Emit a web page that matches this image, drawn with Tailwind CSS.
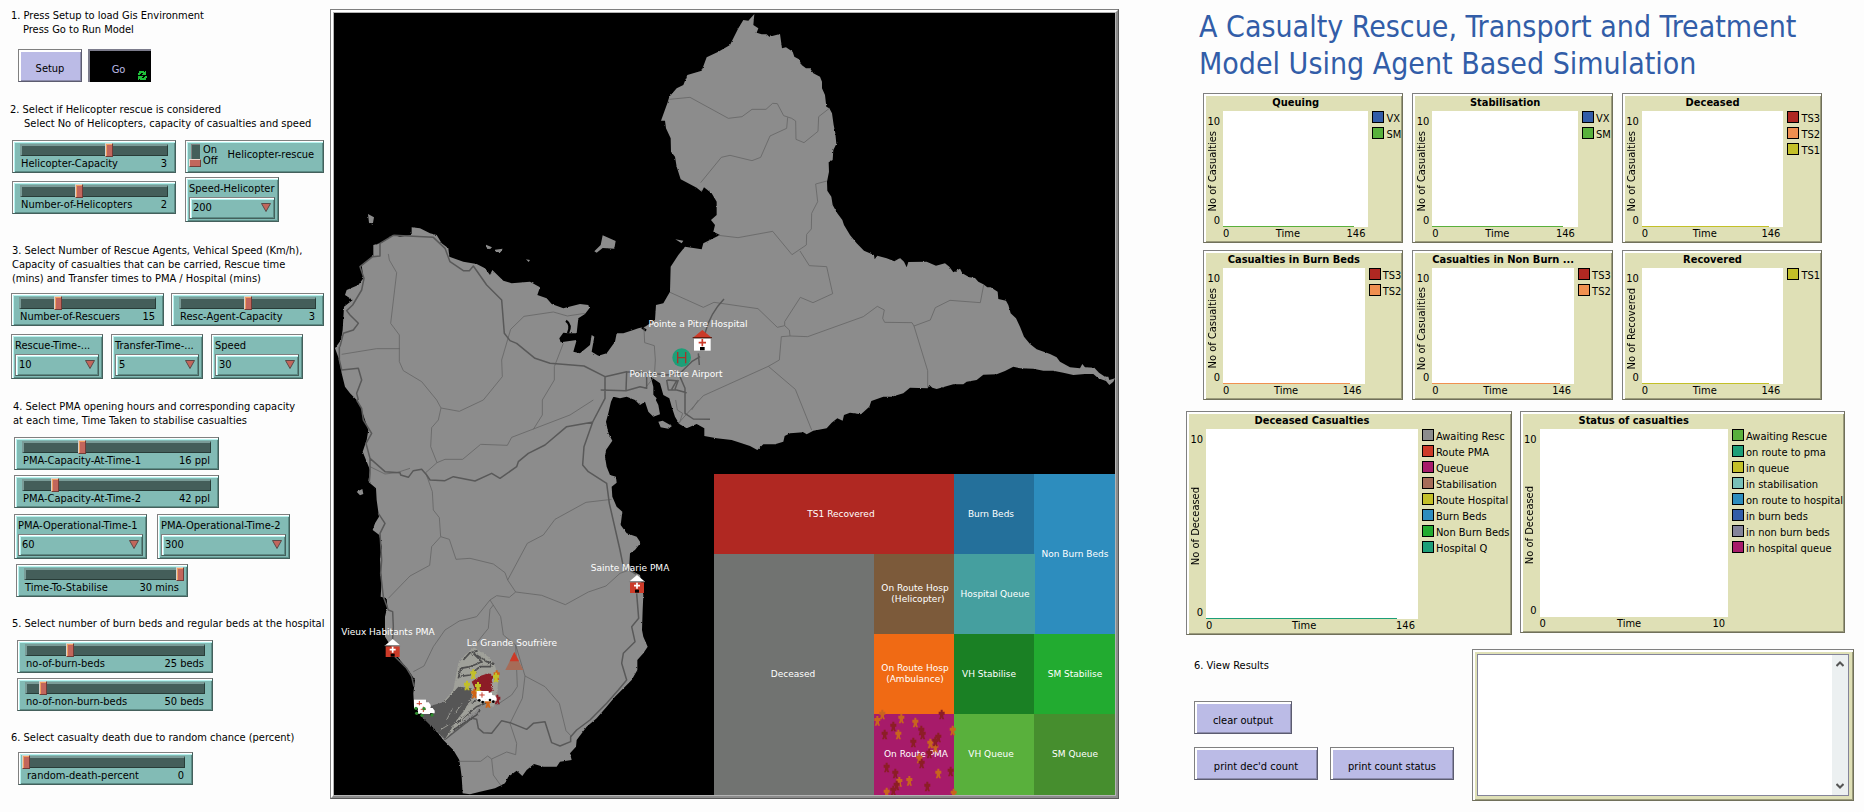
<!DOCTYPE html>
<html lang="en">
<head>
<meta charset="utf-8">
<title>A Casualty Rescue, Transport and Treatment Model</title>
<script src="https://cdn.jsdelivr.net/npm/@tailwindcss/browser@4"></script>
</head>
<body class="bg-[#fdfdfd] font-['DejaVu_Sans_Condensed','DejaVu_Sans',sans-serif] text-[11px] leading-[14px] text-black">
<main class="grid min-h-screen grid-cols-[330fr_789fr_745fr]">

  <!-- Model controls -->
  <section class="flex flex-col items-start pt-[9px] whitespace-nowrap" aria-label="Model controls">
    <p class="ml-[11px]">1. Press Setup to load Gis Environment<br><span class="pl-3">Press Go to Run Model</span></p>
    <div class="mt-3 ml-[18px] flex gap-1.5">
      <button class="h-[33px] w-16 border border-t-[#808080] border-l-[#808080] border-r-[#5c5c70] border-b-[#5c5c70] bg-[#bbbbe6] pt-1.5 shadow-[inset_2px_2px_0_#fff,inset_-1px_-1px_0_#8c8cac]">Setup</button>
      <button class="relative h-[33px] w-[63px] border-t-2 border-l-2 border-[#7c7c8c] bg-black pt-1.5 pr-1 text-[#bbbbe6]">Go
        <svg class="absolute right-1 bottom-0.5 size-[9px]" viewBox="0 0 9 9" fill="#1fbf3a"><path d="M1 0h5v1h1v-1h1v4H4V3h1V2H3v1H2v1H0V2h1zM0 5h5v1H4v1h2V6h1V5h2v2H8v2H2V8H1v1H0z"/></svg>
      </button>
    </div>

    <p class="mt-[21px] ml-2.5">2. Select if Helicopter rescue is considered<br><span class="pl-3.5">Select No of Helicopters, capacity of casualties and speed</span></p>
    <div class="mt-[9px] ml-3 flex gap-[9px]">
      <div class="flex flex-col gap-2">
        <div data-slider="Helicopter-Capacity" data-min="0" data-max="5" data-value="3" class="w-[164px]"></div>
        <div data-slider="Number-of-Helicopters" data-min="0" data-max="5" data-value="2" class="w-[164px]"></div>
      </div>
      <div class="flex flex-col items-start gap-1">
        <label class="flex h-[33px] w-[139px] items-start border border-t-[#808080] border-l-[#808080] border-r-[#44605c] border-b-[#44605c] bg-[#82bbb5] pt-[3px] pl-[3px] shadow-[inset_1px_1px_0_#fff,inset_2px_2px_0_#b8f4f0,inset_-1px_-1px_0_#5c8c86]">
          <span class="relative flex w-3 justify-center">
            <input type="checkbox" role="switch" class="peer h-[15px] w-[9px] appearance-none border-t border-l border-[#808080] bg-[#445e5a]">
            <span class="pointer-events-none absolute top-[15px] left-0 h-2 w-3 border border-t-[#f0d8d0] border-l-[#f0d8d0] border-r-[#703c38] border-b-[#703c38] bg-[#c2665c] peer-checked:top-0"></span>
          </span>
          <span class="flex flex-col pl-0.5 leading-[11px]"><span>On</span><span>Off</span></span>
          <span class="pt-1 pl-2.5">Helicopter-rescue</span>
        </label>
        <div data-chooser="Speed-Helicopter" data-value="200" class="w-[94px]"></div>
      </div>
    </div>

    <p class="mt-[22px] ml-3">3. Select Number of Rescue Agents, Vehical Speed (Km/h),<br>Capacity of casualties that can be carried, Rescue time<br>(mins) and Transfer times to PMA / Hospital (mins)</p>
    <div class="mt-[7px] ml-[11px] flex gap-[7px]">
      <div data-slider="Number-of-Rescuers" data-min="1" data-max="50" data-value="15" class="w-[153px]"></div>
      <div data-slider="Resc-Agent-Capacity" data-min="1" data-max="5" data-value="3" class="w-[153px]"></div>
    </div>
    <div class="mt-2 ml-[11px] flex gap-2">
      <div data-chooser="Rescue-Time-..." data-value="10" class="w-[92px]"></div>
      <div data-chooser="Transfer-Time-..." data-value="5" class="w-[92px]"></div>
      <div data-chooser="Speed" data-value="30" class="w-[92px]"></div>
    </div>

    <p class="mt-[21px] ml-[13px]">4. Select PMA opening hours and corresponding capacity<br>at each time, Time Taken to stabilise casualties</p>
    <div class="mt-[9px] ml-3.5 flex flex-col gap-[5px]">
      <div data-slider="PMA-Capacity-At-Time-1" data-min="0" data-max="50" data-value="16" data-unit=" ppl" class="w-[205px]"></div>
      <div data-slider="PMA-Capacity-At-Time-2" data-min="0" data-max="240" data-value="42" data-unit=" ppl" class="w-[205px]"></div>
      <div class="flex gap-2.5 pt-px">
        <div data-chooser="PMA-Operational-Time-1" data-value="60" class="w-[133px]"></div>
        <div data-chooser="PMA-Operational-Time-2" data-value="300" class="w-[133px]"></div>
      </div>
      <div data-slider="Time-To-Stabilise" data-min="0" data-max="30" data-value="30" data-unit=" mins" class="ml-0.5 w-[172px]"></div>
    </div>

    <p class="mt-5 ml-3">5. Select number of burn beds and regular beds at the hospital</p>
    <div class="mt-[9px] ml-[17px] flex flex-col gap-[5px]">
      <div data-slider="no-of-burn-beds" data-min="0" data-max="100" data-value="25" data-unit=" beds" class="w-[196px]"></div>
      <div data-slider="no-of-non-burn-beds" data-min="0" data-max="500" data-value="50" data-unit=" beds" class="w-[196px]"></div>
    </div>

    <p class="mt-5 ml-[11px]">6. Select casualty death due to random chance (percent)</p>
    <div class="mt-[7px] ml-[18px]">
      <div data-slider="random-death-percent" data-min="0" data-max="100" data-value="0" class="w-[175px]"></div>
    </div>
  </section>

  <!-- World view -->
  <section class="pt-[9px]" aria-label="World view">
    <div class="border border-t-[#808080] border-l-[#808080] border-r-[#585858] border-b-[#585858]">
      <div class="border-2 border-t-white border-l-white border-r-[#8c8c8c] border-b-[#8c8c8c]">
        <div class="border border-[#b4b4b4] bg-black">
          <svg class="block w-full" viewBox="334 13 781 782" role="img" aria-label="Map of Guadeloupe">
            <defs>
              <filter id="coast" x="-2%" y="-2%" width="104%" height="104%"><feTurbulence type="fractalNoise" baseFrequency=".16" numOctaves="2" seed="4"/><feDisplacementMap in="SourceGraphic" scale="6" xChannelSelector="R" yChannelSelector="G"/></filter>
              <filter id="rough" x="-10%" y="-10%" width="120%" height="120%"><feTurbulence type="fractalNoise" baseFrequency=".3" numOctaves="2" seed="9"/><feDisplacementMap in="SourceGraphic" scale="9" xChannelSelector="R" yChannelSelector="G"/></filter>
              <path id="man" d="M-3-14h6v6h6v9H5v6l3 8H2l-2-6-2 6h-6l3-8V1h-4v-9h6z"/>
              <g id="van"><rect x="-20" y="-14" width="36" height="26" fill="#fff"/><path d="M16-6h8l6 8v8H16z" fill="#fff"/><path d="M-4-10v16M-12-2h16" stroke="#c84030" stroke-width="3"/><circle cx="-12" cy="14" r="4"/><circle cx="20" cy="13" r="4"/></g>
            </defs>
            <g transform="translate(330 0) scale(.33333)">
              <g fill="#8c8c8c" filter="url(#coast)">
                <path d="M1273 42 1270 75 1285 85 1280 98 1295 103 1310 103 1318 110 1350 102 1356 145 1368 142 1388 155 1393 170 1407 178 1415 195 1428 205 1440 205 1450 220 1470 230 1476 245 1476 265 1485 285 1489 320 1498 325 1506 340 1511 375 1516 400 1519 432 1510 450 1508 480 1496 487 1497 515 1491 545 1492 572 1504 590 1508 615 1522 640 1537 660 1542 675 1560 705 1580 730 1602 752 1632 765 1634 778 1642 767 1670 775 1693 784 1710 774 1722 785 1730 802 1735 786 1790 785 1818 797 1845 790 1858 800 1870 817 1890 806 1897 820 1918 832 1935 834 1945 845 1960 853 1972 862 1982 862 2003 875 2005 897 2028 902 2035 915 2042 940 2058 955 2070 980 2082 1010 2100 1032 2120 1048 2160 1062 2180 1072 2190 1085 2220 1102 2250 1105 2257 1092 2265 1102 2293 1103 2307 1118 2325 1130 2335 1130 2338 1140 2355 1135 2350 1145 2338 1155 2328 1143 2305 1135 2290 1122 2265 1122 2230 1125 2200 1118 2170 1112 2140 1112 2110 1106 2070 1105 2050 1100 2025 1113 2000 1123 1960 1124 1940 1140 1910 1145 1900 1153 1870 1153 1820 1167 1807 1163 1798 1155 1793 1165 1740 1163 1720 1180 1685 1190 1660 1190 1624 1203 1618 1220 1593 1243 1560 1238 1542 1245 1538 1262 1522 1255 1505 1268 1490 1285 1450 1292 1430 1303 1420 1297 1380 1300 1364 1308 1360 1325 1335 1333 1300 1333 1282 1350 1260 1338 1235 1330 1205 1320 1160 1315 1123 1308 1123 1285 1100 1272 1070 1285 1048 1272 1035 1250 1025 1220 1018 1195 1000 1185 990 1150 962 1130 970 1160 970 1185 985 1215 990 1243 970 1250 955 1235 945 1205 930 1215 915 1200 890 1190 870 1195 850 1190 843 1205 835 1240 828 1265 835 1300 847 1322 828 1350 825 1370 830 1400 840 1425 858 1430 860 1448 845 1460 847 1490 860 1520 877 1535 872 1575 890 1600 920 1610 932 1628 915 1650 900 1660 898 1695 910 1715 930 1725 940 1785 938 1830 936 1890 940 1910 953 1940 940 1960 922 1980 922 2010 905 2040 885 2060 855 2090 830 2120 800 2155 770 2180 740 2220 738 2240 720 2260 725 2280 690 2285 680 2300 640 2300 612 2292 590 2310 577 2328 560 2312 535 2330 525 2350 495 2365 450 2375 420 2383 398 2380 395 2330 388 2280 370 2250 340 2220 310 2180 270 2140 252 2120 250 2080 255 2040 235 2010 210 1980 190 1950 165 1910 165 1850 172 1820 170 1795 152 1790 155 1740 150 1680 155 1640 148 1605 128 1590 135 1570 147 1550 140 1500 138 1465 115 1445 120 1410 98 1355 110 1320 115 1290 95 1230 80 1200 60 1180 45 1160 35 1120 28 1080 15 1045 33 1020 38 990 42 920 68 900 45 885 50 870 85 855 100 835 95 795 130 768 130 735 155 728 190 705 210 710 245 705 245 682 270 685 300 700 320 705 335 730 355 745 358 770 400 785 440 792 465 805 480 825 487 810 520 842 545 850 600 845 630 862 622 885 650 895 665 912 700 925 750 912 775 915 778 925 765 942 745 955 740 1000 715 1000 700 998 688 1015 692 1027 740 1020 730 1055 750 1060 780 1035 785 1005 793 1010 785 1055 805 1067 830 1060 855 1025 860 1000 880 1000 910 990 925 985 945 980 975 960 978 915 1000 910 1020 875 1022 800 1045 765 1065 740 1115 748 1120 730 1170 705 1150 695 1155 675 1143 660 1160 645 1160 605 1145 580 1122 562 1115 575 1100 563 1052 538 1040 500 1035 470 1023 455 1022 415 1008 385 1005 362 993 362 1012 310 1018 290 1040 265 1060 255 1072 225 1115 212 1130 172 1165 155 1200 135 1210 115 1225 85 1240 60 1255 62Z"/>
                <path d="M114 642 132 652 128 674 117 668ZM468 734 486 742 480 748 468 741ZM495 749 518 746 512 757 498 756ZM588 778 600 780 596 786ZM818 706 857 723 853 746 818 744 800 758 793 754 812 735ZM1036 718 1060 722 1055 730ZM80 1475 97 1467 100 1482 90 1486ZM985 1265 998 1262 1026 1278 1015 1286 992 1282ZM965 1180 980 1195 972 1212 955 1200Z"/>
              </g>
              <path d="M708 962q18 12 6 38M948 992l-12-10" fill="none" stroke="#000" stroke-width="7"/>
              <!-- commune boundaries -->
              <g fill="none" stroke="#666" stroke-width="2.5">
                <path d="M1018 298 1080 292 1195 355 1236 350 1266 328 1308 328 1328 310 1342 311 1361 347 1385 355 1397 363 1398 418 1422 428 1464 394 1466 350 1498 325M1373 352 1370 385 1320 408 1292 472 1266 482 1200 466 1174 472 1112 548M1491 543 1457 552 1463 605 1445 640 1444 687 1430 703 1429 735 1386 764 1328 694 1224 713 1165 706M1410 753 1438 797 1490 800 1508 881 1449 908 1411 892 1364 965 1364 977 1378 990 1380 1008 1433 1010 1600 950 1642 919 1663 930 1658 955 1664 967 1746 968 1752 978 1793 1112 1793 1163M1752 978 1801 960 1816 923 1860 901 1951 908 1961 855M1020 877 1120 922 1152 907 1284 926 1342 982 1364 977M1380 1008 1354 1010 1348 1080 1315 1099 1120 1187 1090 1220 1045 1270M1315 1099 1396 1168 1445 1290M942 985 944 1028 973 1037 976 1080 973 1130 945 1165"/>
                <path d="M175 762 178 780 200 818 182 970 208 1005 208 1085 220 1112 275 1145 320 1200 333 1224 388 1234 460 1200 517 1130 515 1080 542 988 582 949 670 936 712 948 765 940M35 1063 140 1046 210 1046M700 1030 673 1100 673 1140 637 1200 637 1245 610 1288M333 1224 325 1260 305 1283 302 1340 321 1388 345 1378 398 1378 452 1333 532 1336 545 1312 720 1245 790 1200 M321 1388 287 1418 307 1475 310 1530 328 1553 332 1610 358 1618 378 1678 420 1675 490 1692 525 1718 533 1740 592 1630 640 1605 675 1558 768 1507 845 1498M332 1610 305 1640 299 1696 240 1728 175 1795M533 1740 557 1776 538 1792 500 1787 480 1800 440 1850 388 1863 345 1890 310 1940 282 1998 250 2015M480 1800 512 1850 520 1905 557 1935 562 2060 545 2085 500 2115M557 1776 635 1786 706 1814 775 1776 828 1758 870 1720 898 1710M490 1815 480 1828 475 1885 435 1935M557 1935 585 2028 645 2060 688 2110 708 2192 725 2210M585 2028 577 2095 540 2170 560 2230 557 2264 530 2256 485 2277 490 2325 515 2360M485 2277 473 2268 452 2284 388 2284M120 1400 165 1422 200 1418 240 1405M1037 1200 1042 1230 1058 1240 1048 1270M1105 1200 1085 1230"/>
              </g>
              <!-- roads -->
              <g fill="none" stroke="#595959" stroke-width="4.5" stroke-linejoin="round">
                <path d="M80 1200 95 1225 100 1260 125 1300 108 1330 120 1375 120 1420 118 1445M120 1375 165 1415 210 1418 212 1425 235 1432 250 1412 275 1408 290 1425 300 1440 345 1442 370 1430 435 1443 485 1420 510 1435 560 1400 565 1385 595 1360 645 1335 710 1280 790 1266M28 1040 28 1080 35 1110 85 1105 95 1140 80 1180 85 1200M190 706 310 712 345 745 360 785 400 812 418 812 430 798 470 855 515 900 523 1000 540 1022 560 1030 615 1075 660 1090 762 1098 825 1130 825 1195 788 1266 762 1340 758 1395 775 1415 830 1450 838 1510 870 1650 880 1700 918 1722M825 1130 890 1115 888 1172 812 1170M888 1172 930 1160 950 1165 950 1118 890 1115M950 1118 1010 1125 1050 1120 1085 1085 1110 1070M1010 1140 1015 1170 1040 1170 1070 1178M1050 1130 1065 1165 1065 1210 1065 1240 1090 1257 1140 1258M1105 1060 1108 1095M1182 897Q1140 940 1125 1000M1012 1140 1040 1142 1025 1168M1045 1140 1035 1168M190 706 150 730 150 768 128 770 90 800 102 835 95 870 68 915 50 932 60 945 85 970 70 990 40 1000 30 1040"/>
                <path d="M920 1780 926 1855 905 1880 915 1925 880 1960 875 1990 890 2040 865 2070 830 2110 780 2160 740 2190 722 2210 722 2225 690 2238 665 2228 645 2165 610 2170 590 2188 540 2168 515 2162 485 2200 460 2198 445 2185 440 2158 425 2155 345 2218M145 1540 165 1570 150 1600 155 1680 152 1720 160 1790 175 1830 188 1835 190 1880 187 1930M195 1970 230 2005 245 2030 252 2060"/>
              </g>
              <!-- evacuated slope -->
              <g filter="url(#rough)">
                <path d="M432 1942 475 1970 495 1998 505 2030 500 2110 485 2122 460 2110 400 2160 345 2218 310 2180 345 2100 370 2070 385 1990 405 1965Z" fill="#a0a19a"/>
                <path d="M385 2060 425 2065 425 2095 400 2135 380 2160 345 2218 320 2195 270 2145 300 2118 345 2105Z" fill="#565656"/>
                <path d="M385 2035 392 2005 420 2000 440 1992 455 1985 430 1960 455 1975 470 1985 490 1990 480 2000 450 2000 420 2025 385 2030M400 1980l18-20 25-8M380 2170l60-50 50-20M370 2190l70-45 10-15M425 2110l30-20" fill="none" stroke="#505050" stroke-width="5"/>
                <path d="M350 2160l20-40M330 2190l25-15M375 2140l22-30M365 2180l15-12M410 2120l18-20M395 2158l20-20" fill="none" stroke="#9a9a94" stroke-width="3"/>
                <path d="M425 2045 450 2028 475 2020 488 2030 482 2050 490 2070 470 2085 440 2078Z" fill="#8c1d26"/>
              </g>
              <g fill="#d06414"><use href="#man" x="500" y="2025"/><use href="#man" x="433" y="2080"/><use href="#man" x="474" y="2108"/><use href="#man" x="445" y="2078"/></g>
              <g fill="#8c1d26"><use href="#man" x="480" y="2035"/><use href="#man" x="502" y="2098"/></g>
              <g fill="#c3c028"><use href="#man" x="430" y="2022"/><use href="#man" x="411" y="2056"/><use href="#man" x="444" y="2060"/><use href="#man" x="498" y="2032"/></g>
              <use href="#van" x="470" y="2092"/><use href="#van" x="460" y="2087"/>
              <use href="#van" x="272" y="2113"/><use href="#van" x="284" y="2130"/>
              <g fill="#2e8b2e"><circle cx="258" cy="2125" r="5"/><circle cx="282" cy="2126" r="5"/><circle cx="260" cy="2140" r="5"/><circle cx="276" cy="2146" r="5"/><circle cx="306" cy="2145" r="5"/></g>
              <!-- volcano -->
              <path d="M553 1956 580 2010H526Z" fill="#a66c58"/><path d="M553 1956 567 1984H539Z" fill="#cc3a28"/>
              <!-- hospital -->
              <path d="M1092 1016h50v36h-50z" fill="#fff"/><path d="M1088 1014 1117 990 1146 1014Z" fill="#cc3a28"/><path d="M1088 1013h58" stroke="#541408" stroke-width="3"/><path d="M1117 1017v22M1106 1028h22" stroke="#cc3a28" stroke-width="5"/><path d="M1110 1041h14v10h-14z"/>
              <!-- heliport -->
              <circle cx="1055" cy="1073" r="28" fill="#1d9f78"/><path d="M1043 1056v34M1067 1056v34M1043 1073h24" fill="none" stroke="#a3362c" stroke-width="4"/>
              <!-- treatment posts -->
              <g id="post"><path d="M167 1939h42v32h-42z" fill="#cc3a28"/><path d="M164 1937 188 1917 212 1937Z" fill="#fff"/><path d="M164 1937h48" stroke="#777" stroke-width="3"/><path d="M188 1940v18M179 1949h18" stroke="#fff" stroke-width="5"/><path d="M182 1961h12v9h-12z"/></g>
              <use href="#post" x="733" y="-192"/>
            </g>
            <!-- casualty state zones -->
            <g>
              <path fill="#b02822" d="M714 474h240v80H714z"/><path fill="#24709b" d="M954 474h80v80h-80z"/><path fill="#2d8dbe" d="M1034 474h81v160h-81z"/>
              <path fill="#717371" d="M714 554h160v242H714z"/><path fill="#7c5a3a" d="M874 554h80v80h-80z"/><path fill="#459f9f" d="M954 554h81v80h-81z"/>
              <path fill="#f06a14" d="M874 634h80v80h-80z"/><path fill="#1a8024" d="M954 634h80v80h-80z"/><path fill="#22ab30" d="M1034 634h81v80h-81z"/>
              <path fill="#a71b6a" d="M874 714h80v82h-80z"/><path fill="#59b03c" d="M954 714h80v82h-80z"/><path fill="#468e2e" d="M1034 714h81v82h-81z"/>
            </g>
            <g class="fill-white font-['DejaVu_Sans',sans-serif] text-[9px]" text-anchor="middle">
              <text x="698" y="327">Pointe a Pitre Hospital</text>
              <text x="676" y="377">Pointe a Pitre Airport</text>
              <text x="630" y="571">Sainte Marie PMA</text>
              <text x="388" y="635">Vieux Habitants PMA</text>
              <text x="512" y="646">La Grande Soufrière</text>
              <text x="841" y="517">TS1 Recovered</text><text x="991" y="517">Burn Beds</text><text x="1075" y="557">Non Burn Beds</text>
              <text x="915" y="591">On Route Hosp</text><text x="918" y="602">(Helicopter)</text><text x="995" y="597">Hospital Queue</text>
              <text x="793" y="677">Deceased</text><text x="915" y="671">On Route Hosp</text><text x="915" y="682">(Ambulance)</text>
              <text x="989" y="677">VH Stabilise</text><text x="1075" y="677">SM Stabilise</text>
              <text x="916" y="757">On Route PMA</text><text x="991" y="757">VH Queue</text><text x="1075" y="757">SM Queue</text>
            </g>
            <g transform="translate(700 460) scale(.33333)">
              <g fill="#c8641e"><use href="#man" x="547" y="763"/><use href="#man" x="532" y="782"/><use href="#man" x="604" y="775"/><use href="#man" x="646" y="787"/><use href="#man" x="595" y="823"/><use href="#man" x="758" y="811"/><use href="#man" x="691" y="850"/><use href="#man" x="706" y="862"/><use href="#man" x="658" y="895"/><use href="#man" x="715" y="940"/><use href="#man" x="628" y="962"/><use href="#man" x="598" y="965"/><use href="#man" x="560" y="997"/><use href="#man" x="761" y="1000"/></g>
              <g fill="#8c1d26"><use href="#man" x="725" y="763"/><use href="#man" x="580" y="799"/><use href="#man" x="554" y="823"/><use href="#man" x="664" y="811"/><use href="#man" x="668" y="823"/><use href="#man" x="640" y="847"/><use href="#man" x="715" y="832"/><use href="#man" x="706" y="844"/><use href="#man" x="688" y="880"/><use href="#man" x="665" y="910"/><use href="#man" x="560" y="922"/><use href="#man" x="586" y="940"/><use href="#man" x="752" y="934"/><use href="#man" x="682" y="979"/><use href="#man" x="590" y="976"/><use href="#man" x="580" y="991"/></g>
            </g>
          </svg>
        </div>
      </div>
    </div>
  </section>

  <!-- Results -->
  <section class="flex flex-col whitespace-nowrap pt-2" aria-label="Results">
    <h1 class="ml-20 text-[30px] leading-[37px] text-[#325da8]">A Casualty Rescue, Transport and Treatment<br>Model Using Agent Based Simulation</h1>

    <div class="mt-[11px] mr-[42px] ml-[84px] grid grid-cols-[1fr_1fr_1fr] gap-x-[9px] gap-y-[7px]">
      <div data-plot="Queuing" data-y="No of Casualties" data-x="146" data-line="#59b03c" data-legend="VX:#325da8,SM:#59b03c" class="h-[150px]"></div>
      <div data-plot="Stabilisation" data-y="No of Casualties" data-x="146" data-line="#59b03c" data-legend="VX:#325da8,SM:#59b03c" class="h-[150px]"></div>
      <div data-plot="Deceased" data-y="No of Casualties" data-x="146" data-line="#c3c028" data-legend="TS3:#b02822,TS2:#f09050,TS1:#c3c028" class="h-[150px]"></div>
      <div data-plot="Casualties in Burn Beds" data-y="No of Casualties" data-x="146" data-line="#f09050" data-legend="TS3:#b02822,TS2:#f09050" class="h-[150px]"></div>
      <div data-plot="Casualties in Non Burn ..." data-y="No of Casualities" data-x="146" data-line="#f09050" data-legend="TS3:#b02822,TS2:#f09050" class="h-[150px]"></div>
      <div data-plot="Recovered" data-y="No of Recovered" data-x="146" data-line="#c3c028" data-legend="TS1:#c3c028" class="h-[150px]"></div>
    </div>

    <div class="mt-[11px] mr-[19px] ml-[67px] grid grid-cols-2 items-start gap-2">
      <div data-plot="Deceased Casualties" data-y="No of Deceased" data-x="146" data-line="#1d9f78" data-legend="Awaiting Resc:#8c8c8c,Route PMA:#cc3a28,Queue:#a71b6a,Stabilisation:#a66c58,Route Hospital:#c3c028,Burn Beds:#2d8dbe,Non Burn Beds:#22ab30,Hospital Q:#1d9f78" class="h-56"></div>
      <div data-plot="Status of casualties" data-y="No of Deceased" data-x="10" data-legend="Awaiting Rescue:#59b03c,on route to pma:#1d9f78,in queue:#c3c028,in stabilisation:#78c0b8,on route to hospital:#2d8dbe,in burn beds:#325da8,in non burn beds:#84849a,in hospital queue:#a71b6a" class="h-[222px]"></div>
    </div>

    <div class="mt-3.5 mr-2.5 ml-[75px] flex items-start gap-[18px]">
      <div class="flex flex-none flex-col items-start pt-2.5">
        <p>6. View Results</p>
        <button class="mt-7 h-[33px] w-[98px] border border-t-[#808080] border-l-[#808080] border-r-[#5c5c70] border-b-[#5c5c70] bg-[#bbbbe6] pt-1.5 shadow-[inset_2px_2px_0_#fff,inset_-1px_-1px_0_#8c8cac]">clear output</button>
        <div class="mt-[13px] flex gap-3">
          <button class="h-[33px] w-[124px] border border-t-[#808080] border-l-[#808080] border-r-[#5c5c70] border-b-[#5c5c70] bg-[#bbbbe6] pt-1.5 shadow-[inset_2px_2px_0_#fff,inset_-1px_-1px_0_#8c8cac]">print dec'd count</button>
          <button class="h-[33px] w-[124px] border border-t-[#808080] border-l-[#808080] border-r-[#5c5c70] border-b-[#5c5c70] bg-[#bbbbe6] pt-1.5 shadow-[inset_2px_2px_0_#fff,inset_-1px_-1px_0_#8c8cac]">print count status</button>
        </div>
      </div>
      <div class="h-[152px] flex-1 border border-t-[#808080] border-l-[#808080] border-r-[#70705a] border-b-[#70705a] bg-[#dfe0b6] p-1 shadow-[inset_2px_2px_0_#fff,inset_-1px_-1px_0_#9c9c7c]">
        <div class="flex h-full border border-[#84849a] bg-white">
          <textarea aria-label="Output" readonly class="block h-full min-w-0 flex-1 resize-none outline-none"></textarea>
          <div class="flex w-4 flex-col justify-between bg-[#ecf0f1]">
            <button aria-label="Scroll up" class="flex h-[18px] items-center justify-center"><svg class="h-[6px] w-2" viewBox="0 0 8 6" fill="none" stroke="#555" stroke-width="2"><path d="M.5 5 4 1.500 7.500 5"/></svg></button>
            <button aria-label="Scroll down" class="flex h-[18px] items-center justify-center"><svg class="h-[6px] w-2" viewBox="0 0 8 6" fill="none" stroke="#555" stroke-width="2"><path d="M.5 1 4 4.500 7.500 1"/></svg></button>
          </div>
        </div>
      </div>
    </div>
  </section>
</main>

<script>
  const bevel = 'border border-t-[#808080] border-l-[#808080] border-r-[#44605c] border-b-[#44605c] bg-[#82bbb5] shadow-[inset_1px_1px_0_#fff,inset_2px_2px_0_#b8f4f0,inset_-1px_-1px_0_#5c8c86]';

  document.querySelectorAll('[data-slider]').forEach((el, i) => {
    const d = el.dataset;
    el.innerHTML = `
      <div class="h-[33px] px-[7px] pt-[3px] ${bevel}">
        <div class="h-3 border-t-2 border-r border-b border-l-2 border-t-[#7a9c98] border-l-[#7a9c98] border-r-[#283c38] border-b-[#283c38] bg-[#445e5a]">
          <input id="slider-${i}" type="range" min="${d.min}" max="${d.max}" value="${d.value}"
            class="-mt-[3px] -ml-1.5 block h-3.5 w-[calc(100%+11px)] cursor-pointer appearance-none bg-transparent [&::-webkit-slider-thumb]:h-3.5 [&::-webkit-slider-thumb]:w-2 [&::-webkit-slider-thumb]:appearance-none [&::-webkit-slider-thumb]:border [&::-webkit-slider-thumb]:border-t-[#d8d0cc] [&::-webkit-slider-thumb]:border-r-[#703c38] [&::-webkit-slider-thumb]:border-b-[#703c38] [&::-webkit-slider-thumb]:border-l-[#d8d0cc] [&::-webkit-slider-thumb]:bg-[#c2665c] [&::-webkit-slider-thumb]:shadow-[inset_1px_1px_0_#f0a060]">
        </div>
        <div class="flex justify-between px-px pt-px"><label for="slider-${i}">${d.slider}</label><output for="slider-${i}">${d.value}${d.unit || ''}</output></div>
      </div>`;
    const input = el.querySelector('input'), out = el.querySelector('output');
    input.addEventListener('input', () => { out.textContent = input.value + (d.unit || ''); });
  });

  document.querySelectorAll('[data-chooser]').forEach((el, i) => {
    const d = el.dataset;
    el.innerHTML = `
      <div class="h-[45px] px-[3px] pt-1 ${bevel}">
        <label for="chooser-${i}" class="block">${d.chooser}</label>
        <div class="relative mt-px">
          <select id="chooser-${i}" class="block h-[22px] w-full appearance-none pl-[3px] text-[11px] leading-[14px] outline-none ${bevel}"><option>${d.value}</option></select>
          <svg class="pointer-events-none absolute top-[6px] right-1 h-[9px] w-2.5" viewBox="0 0 10 9" fill="#c2665c" stroke="#5a4a48" stroke-width="1"><path d="M.5.500h9L5 8.500z"/></svg>
        </div>
      </div>`;
  });

  document.querySelectorAll('[data-plot]').forEach(el => {
    const d = el.dataset;
    const legend = d.legend.split(',').map(s => {
      const [name, color] = s.split(':');
      return `<li class="flex h-4 gap-0.5"><span class="size-3 flex-none border border-black" style="background:${color}"></span><span class="pt-px">${name}</span></li>`;
    }).join('');
    const line = d.line ? `<div class="h-px w-[90%]" style="background:${d.line}"></div>` : '';
    el.innerHTML = `
      <figure class="flex h-full border border-t-[#808080] border-l-[#808080] border-r-[#70705a] border-b-[#70705a] bg-[#dfe0b6] shadow-[inset_2px_2px_0_#fff,inset_-1px_-1px_0_#9c9c7c]">
        <div class="flex w-[19px] flex-none flex-col items-end justify-between pt-[21px] pr-[3px] pb-[14px]">
          <span>10</span><span class="rotate-180 [writing-mode:vertical-rl]">${d.y}</span><span>0</span>
        </div>
        <div class="flex min-w-0 flex-1 flex-col">
          <figcaption class="flex h-[17px] justify-center pt-0.5 font-bold">${d.plot}</figcaption>
          <div class="flex flex-1 items-end bg-white">${line}</div>
          <div class="flex h-[15px] justify-between pr-[3px]"><span>0</span><span>Time</span><span>${d.x}</span></div>
        </div>
        <ul class="flex-none pt-[17px] pr-px pl-1">${legend}</ul>
      </figure>`;
  });
</script>
</body>
</html>
